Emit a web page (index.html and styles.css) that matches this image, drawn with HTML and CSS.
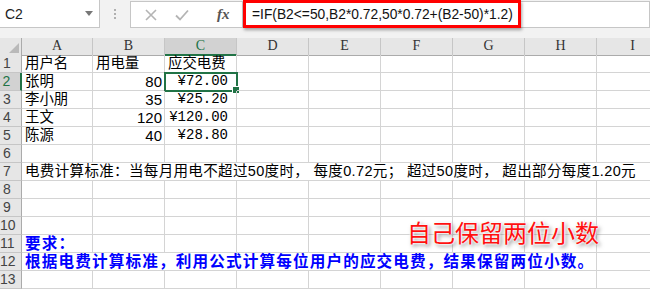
FILE: index.html
```html
<!DOCTYPE html>
<html lang="zh">
<head>
    <meta charset="UTF-8">
    <title>电费计算</title>
    <link rel="stylesheet" href="styles.css">
</head>
<body>
    <div id="app">
        <div id="formulaBar">
            <div class="name-box">
                <span>C2</span>
                <svg class="drop" width="8" height="5" viewBox="0 0 8 5"><path d="M0 0H8L4 5Z" fill="#777"/></svg>
            </div>
            <div class="grip"><i></i><i></i><i></i></div>
            <div class="fx-box">
                <svg width="12" height="12" viewBox="0 0 12 12"><path d="M1 1L11 11M11 1L1 11" stroke="#b4b4b4" stroke-width="1.6"/></svg>
                <svg width="14" height="12" viewBox="0 0 14 12"><path d="M1 6.5L5 10.5L13 1.5" stroke="#b4b4b4" stroke-width="1.8" fill="none"/></svg>
                <span class="fx">fx</span>
            </div>
            <div class="formula">=IF(B2&lt;=50,B2*0.72,50*0.72+(B2-50)*1.2)</div>
            <div class="mark"></div>
        </div>

        <div id="sheet">
            <div class="row head">
                <div class="corner"><svg width="10" height="10" viewBox="0 0 10 10"><path d="M10 0V10H0Z" fill="#b9b9b9"/></svg></div>
                <div class="ch">A</div><div class="ch">B</div><div class="ch sel">C</div><div class="ch">D</div>
                <div class="ch">E</div><div class="ch">F</div><div class="ch">G</div><div class="ch">H</div><div class="ch">I</div>
            </div>
            <div class="row">
                <div class="rh">1</div>
                <div class="c">用户名</div><div class="c">用电量</div><div class="c">应交电费</div>
                <div class="c"></div><div class="c"></div><div class="c"></div><div class="c"></div><div class="c"></div><div class="c"></div>
            </div>
            <div class="row">
                <div class="rh sel">2</div>
                <div class="c">张明</div><div class="c num">80</div><div class="c money active">¥72.00</div>
                <div class="c"></div><div class="c"></div><div class="c"></div><div class="c"></div><div class="c"></div><div class="c"></div>
            </div>
            <div class="row">
                <div class="rh">3</div>
                <div class="c">李小朋</div><div class="c num">35</div><div class="c money">¥25.20</div>
                <div class="c"></div><div class="c"></div><div class="c"></div><div class="c"></div><div class="c"></div><div class="c"></div>
            </div>
            <div class="row">
                <div class="rh">4</div>
                <div class="c">王文</div><div class="c num">120</div><div class="c money">¥120.00</div>
                <div class="c"></div><div class="c"></div><div class="c"></div><div class="c"></div><div class="c"></div><div class="c"></div>
            </div>
            <div class="row">
                <div class="rh">5</div>
                <div class="c">陈源</div><div class="c num">40</div><div class="c money">¥28.80</div>
                <div class="c"></div><div class="c"></div><div class="c"></div><div class="c"></div><div class="c"></div><div class="c"></div>
            </div>
            <div class="row">
                <div class="rh">6</div>
                <div class="c"></div><div class="c"></div><div class="c"></div><div class="c"></div><div class="c"></div>
                <div class="c"></div><div class="c"></div><div class="c"></div><div class="c"></div>
            </div>
            <div class="row">
                <div class="rh">7</div>
                <div class="c wide rule">电费计算标准：当每月用电不超过50度时， 每度0.72元； 超过50度时， 超出部分每度1.20元</div>
            </div>
            <div class="row">
                <div class="rh">8</div>
                <div class="c"></div><div class="c"></div><div class="c"></div><div class="c"></div><div class="c"></div>
                <div class="c"></div><div class="c"></div><div class="c"></div><div class="c"></div>
            </div>
            <div class="row">
                <div class="rh">9</div>
                <div class="c"></div><div class="c"></div><div class="c"></div><div class="c"></div><div class="c"></div>
                <div class="c"></div><div class="c"></div><div class="c"></div><div class="c"></div>
            </div>
            <div class="row">
                <div class="rh">10</div>
                <div class="c"></div><div class="c"></div><div class="c"></div><div class="c"></div><div class="c"></div>
                <div class="c"></div><div class="c"></div><div class="c"></div><div class="c"></div>
            </div>
            <div class="row">
                <div class="rh">11</div>
                <div class="c task">要求：</div><div class="c"></div><div class="c"></div><div class="c"></div><div class="c"></div>
                <div class="c"></div><div class="c"></div><div class="c"></div><div class="c"></div>
            </div>
            <div class="row">
                <div class="rh">12</div>
                <div class="c task span8">根据电费计算标准，利用公式计算每位用户的应交电费，结果保留两位小数。</div>
                <div class="c"></div>
            </div>
            <div class="row">
                <div class="rh">13</div>
                <div class="c"></div><div class="c"></div><div class="c"></div><div class="c"></div><div class="c"></div>
                <div class="c"></div><div class="c"></div><div class="c"></div><div class="c"></div>
            </div>

            <div class="note">自己保留两位小数</div>
        </div>
    </div>
</body>
</html>
```

FILE: styles.css
```css
body { margin: 0; padding: 0; background: #fff; font-family: "Liberation Sans", "Noto Sans CJK SC", sans-serif; }
#app { width: 650px; height: 289px; overflow: hidden; }

#formulaBar {
    position: relative;
    display: flex;
    height: 38px;
    background: #f2f2f2;
    box-sizing: border-box;
}
.name-box {
    display: flex;
    align-items: center;
    justify-content: space-between;
    width: 100px;
    height: 28px;
    padding: 0 6px 0 5px;
    box-sizing: border-box;
    background: #fff;
    border-right: 1px solid #c6c6c6;
    border-bottom: 1px solid #c6c6c6;
    font-size: 14px;
    color: #222;
}
.grip {
    width: 30px;
    height: 28px;
    display: flex;
    flex-direction: column;
    align-items: center;
    justify-content: center;
    gap: 2px;
}
.grip i { width: 2px; height: 2px; background: #b0b0b0; }
.fx-box {
    display: flex;
    align-items: center;
    gap: 18px;
    width: 112px;
    height: 27px;
    margin-top: 1px;
    padding-left: 14px;
    box-sizing: border-box;
    background: #fff;
    border: 1px solid #c6c6c6;
    border-right: none;
}
.fx {
    margin-left: 10px;
    font-family: "Liberation Serif", serif;
    font-style: italic;
    font-weight: bold;
    font-size: 15px;
    color: #555;
}
.formula {
    flex: 1;
    height: 27px;
    margin-top: 1px;
    padding-left: 9px;
    line-height: 25px;
    box-sizing: border-box;
    background: #fff;
    border: 1px solid #c6c6c6;
    font-size: 13.8px;
    color: #111;
    white-space: nowrap;
}
.mark {
    position: absolute;
    left: 243px;
    top: 0;
    width: 278px;
    height: 28px;
    box-sizing: border-box;
    border: 3px solid #ff0000;
    box-shadow: 1px 2px 3px rgba(0, 0, 0, 0.35);
}

#sheet { position: relative; }
.row {
    display: grid;
    grid-template-columns: 22px 71px repeat(8, 72px);
    height: 18px;
}
.row.head { height: 17px; background: #e6e6e6; }
.corner {
    display: flex;
    align-items: flex-end;
    justify-content: flex-end;
    padding: 0 2px 2px 0;
    border-right: 1px solid #ababab;
    border-bottom: 1px solid #ababab;
}
.ch {
    text-align: center;
    font-family: "Liberation Serif", serif;
    font-size: 14px;
    line-height: 16px;
    color: #333;
    border-right: 1px solid #c6c6c6;
    border-bottom: 1px solid #ababab;
}
.ch.sel { background: #d2d2d2; color: #217346; border-bottom: 2px solid #217346; }
.rh {
    background: #e6e6e6;
    border-right: 1px solid #ababab;
    border-bottom: 1px solid #c6c6c6;
    text-align: center;
    padding-right: 7px;
    font-size: 14px;
    line-height: 17px;
    color: #444;
    box-sizing: border-box;
}
.rh.sel { background: #d2d2d2; color: #217346; border-right: 2px solid #217346; }
.c {
    position: relative;
    border-right: 1px solid #d4d4d4;
    border-bottom: 1px solid #d4d4d4;
    padding: 0 3px;
    font-family: "Liberation Sans", "Noto Sans CJK SC", sans-serif;
    font-size: 14.4px;
    line-height: 17px;
    color: #000;
    white-space: nowrap;
}
.c.num { text-align: right; padding-right: 2px; font-size: 15px; }
.c.money { text-align: right; padding-right: 8px; font-family: "Liberation Mono", "Noto Sans CJK SC", monospace; font-size: 14px; }
.c.active { outline: 2px solid #217346; outline-offset: -1px; }
.c.active::after {
    content: "";
    position: absolute;
    right: -4px;
    bottom: -4px;
    width: 6px;
    height: 6px;
    background: #217346;
    border: 1px solid #fff;
}
.c.wide { grid-column: 2 / -1; }
.c.span8 { grid-column: 2 / span 8; }
.rule { font-size: 14.5px; letter-spacing: 0.35px; }
.task { color: #0000ff; font-weight: bold; font-size: 15.6px; letter-spacing: 1.15px; }

.note {
    position: absolute;
    left: 407px;
    top: 180px;
    font-family: "Noto Sans CJK SC", sans-serif;
    font-size: 24px;
    line-height: 28px;
    color: #ff1010;
    white-space: nowrap;
    text-shadow: 0 0 2px #fff, 0 0 2px #fff, 0 0 3px #fff, 2px 2px 4px rgba(0, 0, 0, 0.55);
}
```
